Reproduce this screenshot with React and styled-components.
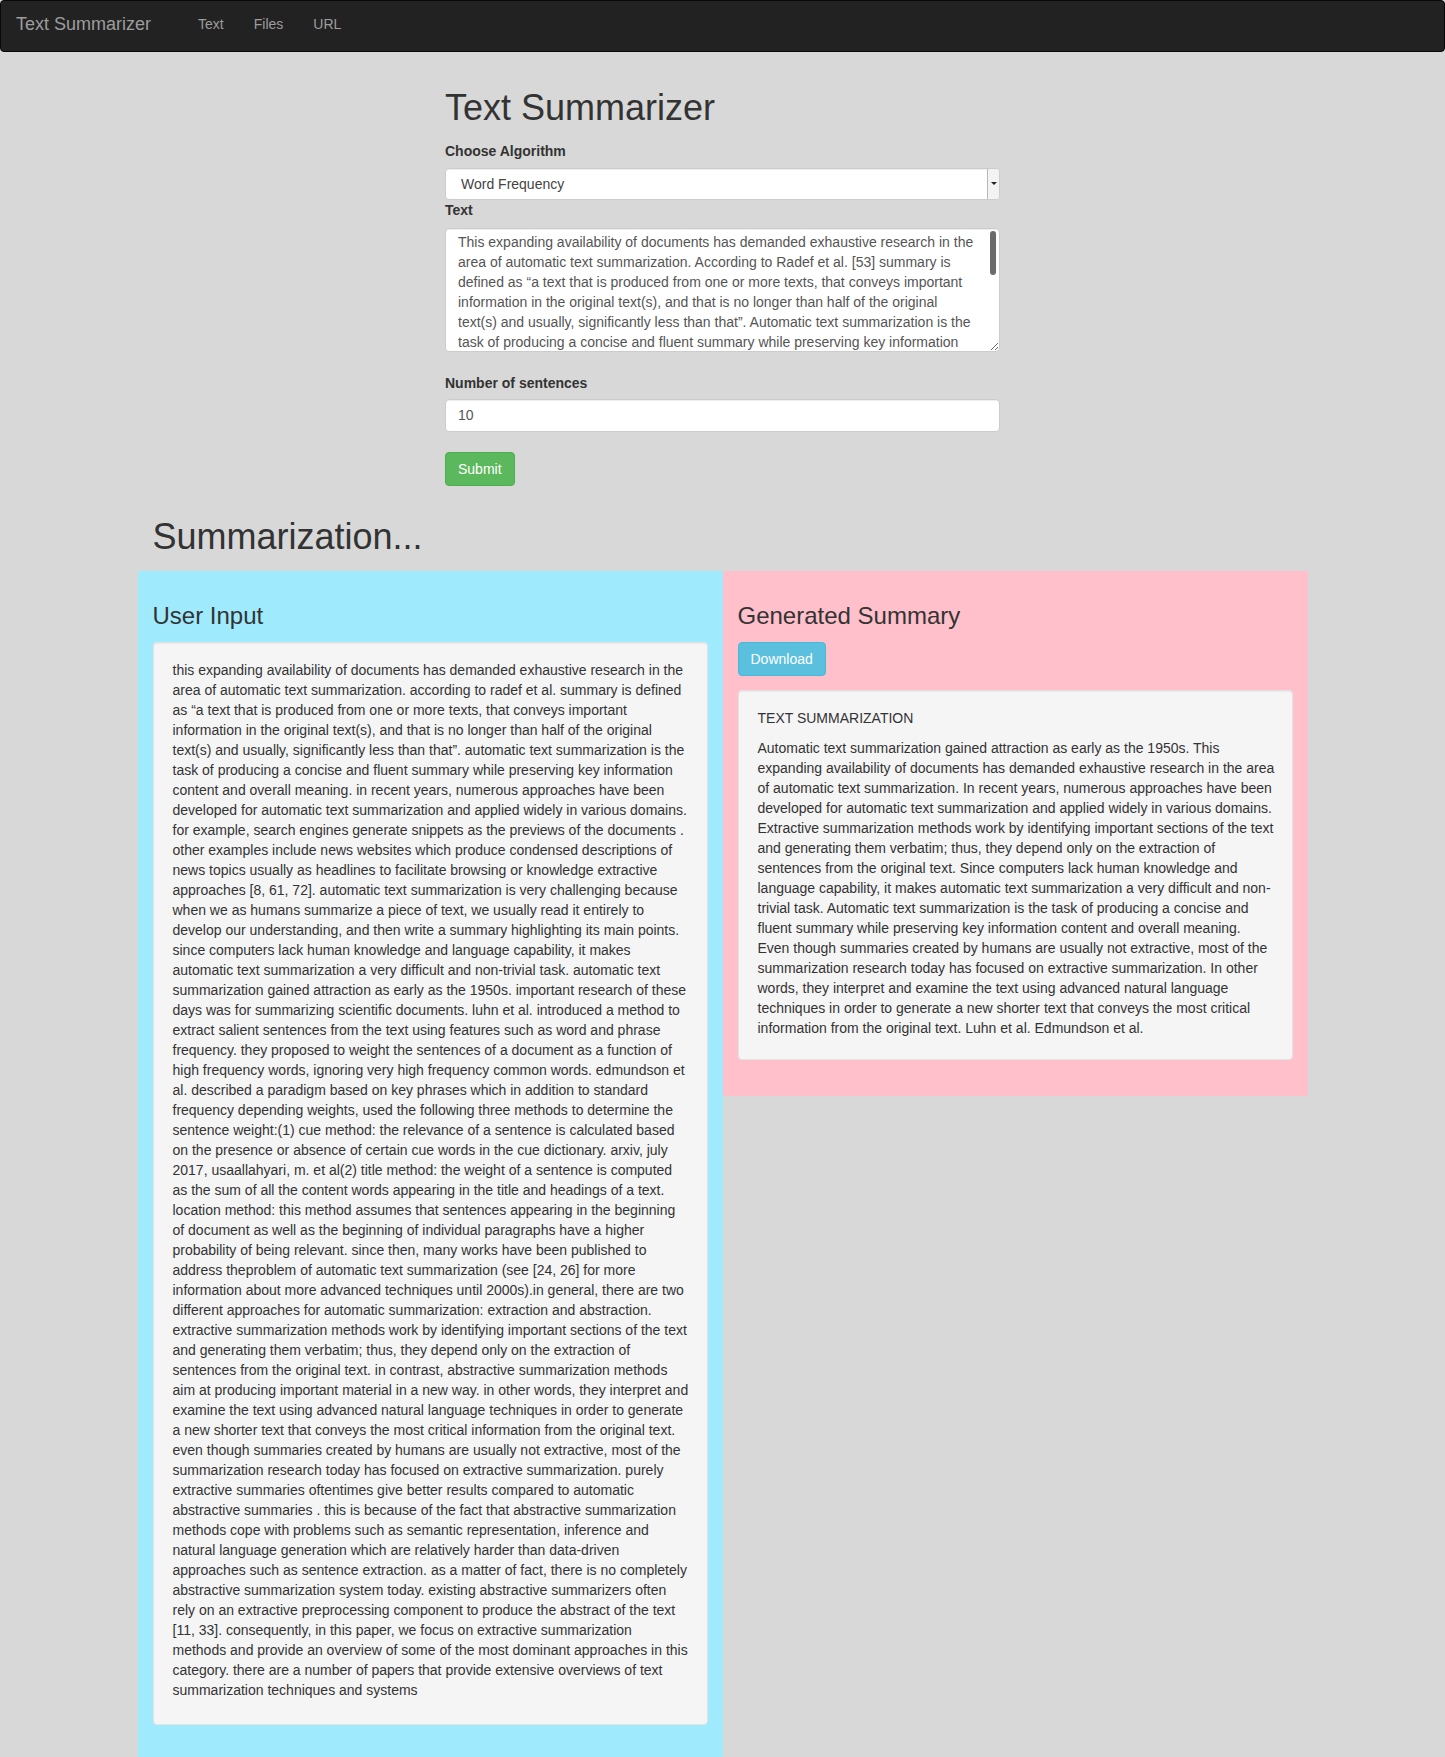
import React, { useState } from 'react'
import styled, { createGlobalStyle } from 'styled-components'

const GlobalStyle = createGlobalStyle`
  * { box-sizing: border-box; }
  body {
    margin: 0;
    background: #d8d8d8;
    font-family: "Liberation Sans", Arial, Helvetica, sans-serif;
    font-size: 14px;
    line-height: 20px;
    color: #333;
  }
`

const Navbar = styled.nav`
  display: flex;
  height: 52px;
  padding: 0 15px;
  margin-bottom: 20px;
  background: #222;
  border: 1px solid #080808;
  border-radius: 4px;
`
const Brand = styled.a`
  margin-left: -15px;
  padding: 13px 15px 17px;
  font-size: 18px;
  line-height: 20px;
  color: #9d9d9d;
  text-decoration: none;
`
const NavList = styled.ul`
  display: flex;
  list-style: none;
  margin: 0 0 0 17px;
  padding: 0;
`
const NavLink = styled.a`
  display: block;
  padding: 13px 15px 17px;
  line-height: 20px;
  color: #9d9d9d;
  text-decoration: none;
`

const Container = styled.div`
  width: 1170px;
  margin: 0 auto;
  padding: 0 15px;
`
const Row = styled.div`
  display: flex;
  align-items: flex-start;
  margin: 0 -15px;
`
const FormCol = styled.form`
  width: 50%;
  margin-left: 25%;
  padding: 0 15px;
`
const PageTitle = styled.h1`
  font-size: 36px;
  font-weight: 500;
  line-height: 1.1;
  margin: ${p => p.$spaced ? '31px 0 15px' : '16px 0 13px'};
`
const Label = styled.label`
  display: block;
  font-weight: 700;
  margin-top: ${p => p.$top || 0}px;
  margin-bottom: ${p => p.$bottom || 7}px;
`
const SelectBox = styled.div`
  display: flex;
  height: 32px;
  background: #fff;
  border: 1px solid #ccc;
  border-radius: 4px;
  overflow: hidden;
  box-shadow: inset 0 1px 1px rgba(0, 0, 0, 0.075);
`
const Select = styled.select`
  flex: 1;
  appearance: none;
  border: 0;
  outline: none;
  background: transparent;
  padding: 0 15px;
  font: inherit;
  color: #444;
`
const ArrowBox = styled.div`
  width: 12px;
  display: flex;
  align-items: center;
  justify-content: center;
  background: #f3f3f3;
  border-left: 1px solid #b8b8b8;

  &::after {
    content: "";
    border-left: 3px solid transparent;
    border-right: 3px solid transparent;
    border-top: 3px solid #222;
  }
`
const TextAreaWrap = styled.div`
  position: relative;
`
const TextArea = styled.textarea`
  display: block;
  width: 100%;
  height: 124px;
  padding: 3px 22px 6px 12px;
  font: inherit;
  line-height: 20px;
  color: #555;
  background: #fff;
  border: 1px solid #ccc;
  border-radius: 4px;
  box-shadow: inset 0 1px 1px rgba(0, 0, 0, 0.075);
  outline: none;
  resize: vertical;
  scrollbar-width: none;
`
const ScrollThumb = styled.span`
  position: absolute;
  top: 3px;
  right: 4px;
  width: 6px;
  height: 44px;
  border-radius: 3px;
  background: #6b6b6b;
  pointer-events: none;
`
const Input = styled.input`
  display: block;
  width: 100%;
  height: 33px;
  padding: 0 12px;
  font: inherit;
  color: #555;
  background: #fff;
  border: 1px solid #ccc;
  border-radius: 4px;
  box-shadow: inset 0 1px 1px rgba(0, 0, 0, 0.075);
  outline: none;
`
const tones = {
  success: ['#5cb85c', '#4cae4c'],
  info: ['#5bc0de', '#46b8da'],
}
const Button = styled.button`
  display: inline-block;
  vertical-align: top;
  padding: 6px 12px;
  font: inherit;
  line-height: 20px;
  color: #fff;
  background: ${p => tones[p.$tone][0]};
  border: 1px solid ${p => tones[p.$tone][1]};
  border-radius: 4px;
  cursor: pointer;
`
const ButtonRow = styled.div`
  margin-top: ${p => p.$top || 0}px;
  margin-bottom: ${p => p.$bottom || 0}px;
`

const Panel = styled.section`
  width: 50%;
  padding: 0 15px 36px;
  background: ${p => p.$bg};
`
const PanelTitle = styled.h3`
  font-size: 24px;
  font-weight: 500;
  line-height: 1.1;
  margin: 32px 0 12px;
`
const Well = styled.div`
  padding: 17px ${p => p.$right}px 21px 19px;
  background: #f5f5f5;
  border: 1px solid #e3e3e3;
  border-radius: 4px;
  box-shadow: inset 0 1px 1px rgba(0, 0, 0, 0.05);
`
const WellText = styled.p`
  margin: 0 0 ${p => p.$gap ?? 0}px;
`

const sourceText = `This expanding availability of documents has demanded exhaustive research in the area of automatic text summarization. According to Radef et al. [53] summary is defined as “a text that is produced from one or more texts, that conveys important information in the original text(s), and that is no longer than half of the original text(s) and usually, significantly less than that”. Automatic text summarization is the task of producing a concise and fluent summary while preserving key information content and overall meaning. In recent years, numerous approaches have been developed for automatic text summarization and applied widely in various domains. For example, search engines generate snippets as the previews of the documents [3]. Other examples include news websites which produce condensed descriptions of news topics usually as headlines to facilitate browsing or knowledge extractive approaches [8, 61, 72]. Automatic text summarization is very challenging because when we as humans summarize a piece of text, we usually read it entirely to develop our understanding, and then write a summary highlighting its main points. Since computers lack human knowledge and language capability, it makes automatic text summarization a very difficult and non-trivial task. Automatic text summarization gained attraction as early as the 1950s. Important research of these days was for summarizing scientific documents. Luhn et al. introduced a method to extract salient sentences from the text using features such as word and phrase frequency. They proposed to weight the sentences of a document as a function of high frequency words, ignoring very high frequency common words. Edmundson et al. described a paradigm based on key phrases which in addition to standard frequency depending weights, used the following three methods to determine the sentence weight.`

const inputText = `this expanding availability of documents has demanded exhaustive research in the area of automatic text summarization. according to radef et al. summary is defined as “a text that is produced from one or more texts, that conveys important information in the original text(s), and that is no longer than half of the original text(s) and usually, significantly less than that”. automatic text summarization is the task of producing a concise and fluent summary while preserving key information content and overall meaning. in recent years, numerous approaches have been developed for automatic text summarization and applied widely in various domains. for example, search engines generate snippets as the previews of the documents . other examples include news websites which produce condensed descriptions of news topics usually as headlines to facilitate browsing or knowledge extractive approaches [8, 61, 72]. automatic text summarization is very challenging because when we as humans summarize a piece of text, we usually read it entirely to develop our understanding, and then write a summary highlighting its main points. since computers lack human knowledge and language capability, it makes automatic text summarization a very difficult and non-trivial task. automatic text summarization gained attraction as early as the 1950s. important research of these days was for summarizing scientific documents. luhn et al. introduced a method to extract salient sentences from the text using features such as word and phrase frequency. they proposed to weight the sentences of a document as a function of high frequency words, ignoring very high frequency common words. edmundson et al. described a paradigm based on key phrases which in addition to standard frequency depending weights, used the following three methods to determine the sentence weight:(1) cue method: the relevance of a sentence is calculated based on the presence or absence of certain cue words in the cue dictionary. arxiv, july 2017, usaallahyari, m. et al(2) title method: the weight of a sentence is computed as the sum of all the content words appearing in the title and headings of a text. location method: this method assumes that sentences appearing in the beginning of document as well as the beginning of individual paragraphs have a higher probability of being relevant. since then, many works have been published to address theproblem of automatic text summarization (see [24, 26] for more information about more advanced techniques until 2000s).in general, there are two different approaches for automatic summarization: extraction and abstraction. extractive summarization methods work by identifying important sections of the text and generating them verbatim; thus, they depend only on the extraction of sentences from the original text. in contrast, abstractive summarization methods aim at producing important material in a new way. in other words, they interpret and examine the text using advanced natural language techniques in order to generate a new shorter text that conveys the most critical information from the original text. even though summaries created by humans are usually not extractive, most of the summarization research today has focused on extractive summarization. purely extractive summaries oftentimes give better results compared to automatic abstractive summaries . this is because of the fact that abstractive summarization methods cope with problems such as semantic representation, inference and natural language generation which are relatively harder than data-driven approaches such as sentence extraction. as a matter of fact, there is no completely abstractive summarization system today. existing abstractive summarizers often rely on an extractive preprocessing component to produce the abstract of the text [11, 33]. consequently, in this paper, we focus on extractive summarization methods and provide an overview of some of the most dominant approaches in this category. there are a number of papers that provide extensive overviews of text summarization techniques and systems`

const summaryText = `Automatic text summarization gained attraction as early as the 1950s. This expanding availability of documents has demanded exhaustive research in the area of automatic text summarization. In recent years, numerous approaches have been developed for automatic text summarization and applied widely in various domains. Extractive summarization methods work by identifying important sections of the text and generating them verbatim; thus, they depend only on the extraction of sentences from the original text. Since computers lack human knowledge and language capability, it makes automatic text summarization a very difficult and non-trivial task. Automatic text summarization is the task of producing a concise and fluent summary while preserving key information content and overall meaning. Even though summaries created by humans are usually not extractive, most of the summarization research today has focused on extractive summarization. In other words, they interpret and examine the text using advanced natural language techniques in order to generate a new shorter text that conveys the most critical information from the original text. Luhn et al. Edmundson et al.`

const App = () => {
  const [algorithm, setAlgorithm] = useState('word')
  const [text, setText] = useState(sourceText)
  const [count, setCount] = useState('10')

  return (
    <>
      <GlobalStyle />
      <Navbar>
        <Brand href="#">Text Summarizer</Brand>
        <NavList>
          <li><NavLink href="#">Text</NavLink></li>
          <li><NavLink href="#">Files</NavLink></li>
          <li><NavLink href="#">URL</NavLink></li>
        </NavList>
      </Navbar>

      <Container>
        <Row>
          <FormCol onSubmit={e => e.preventDefault()}>
            <PageTitle>Text Summarizer</PageTitle>
            <Label>Choose Algorithm</Label>
            <SelectBox>
              <Select value={algorithm} onChange={e => setAlgorithm(e.target.value)}>
                <option value="word">Word Frequency</option>
                <option value="textrank">TextRank</option>
                <option value="lsa">LSA</option>
              </Select>
              <ArrowBox />
            </SelectBox>
            <Label $bottom={8}>Text</Label>
            <TextAreaWrap>
              <TextArea value={text} onChange={e => setText(e.target.value)} />
              <ScrollThumb />
            </TextAreaWrap>
            <Label $top={21} $bottom={6}>Number of sentences</Label>
            <Input value={count} onChange={e => setCount(e.target.value)} />
            <ButtonRow $top={20}>
              <Button type="submit" $tone="success">Submit</Button>
            </ButtonRow>
          </FormCol>
        </Row>

        <PageTitle $spaced>Summarization...</PageTitle>

        <Row>
          <Panel $bg="#a0eafd">
            <PanelTitle>User Input</PanelTitle>
            <Well $right={18}>
              <WellText $gap={3}>{inputText}</WellText>
            </Well>
          </Panel>
          <Panel $bg="#ffc0cb">
            <PanelTitle>Generated Summary</PanelTitle>
            <ButtonRow $bottom={14}>
              <Button type="button" $tone="info">Download</Button>
            </ButtonRow>
            <Well $right={16}>
              <WellText $gap={10}>TEXT SUMMARIZATION</WellText>
              <WellText>{summaryText}</WellText>
            </Well>
          </Panel>
        </Row>
      </Container>
    </>
  )
}

export default App
